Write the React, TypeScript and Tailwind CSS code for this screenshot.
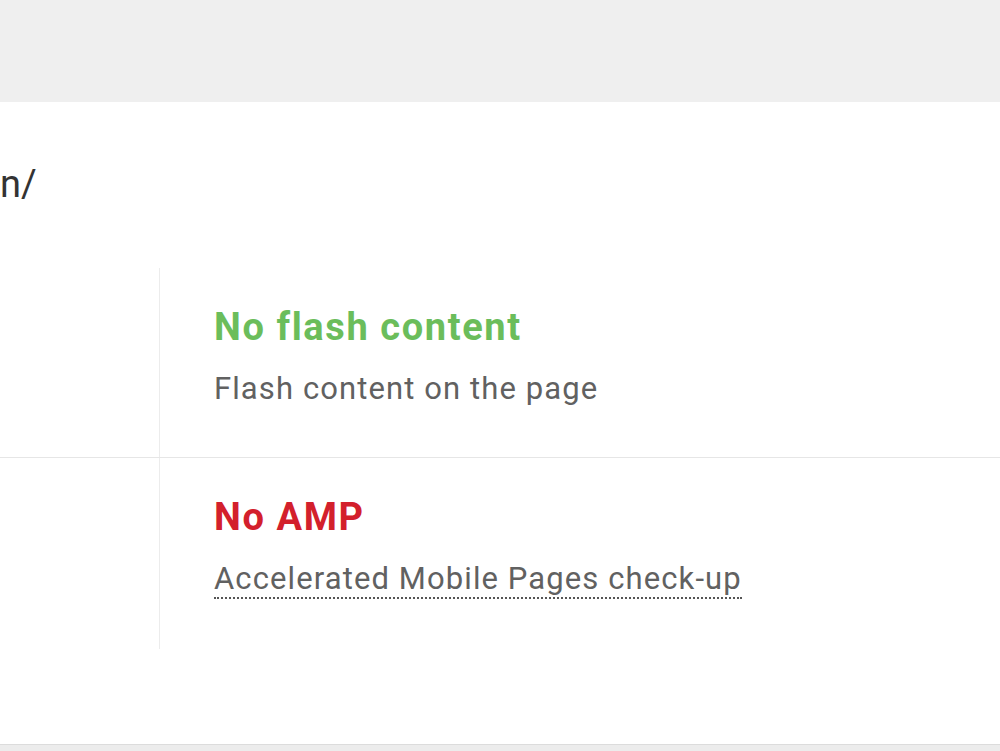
const rows = [
  {
    title: "No flash content",
    tone: "text-[#6bbd5b]",
    note: "Flash content on the page",
    dotted: false,
  },
  {
    title: "No AMP",
    tone: "text-[#d3202c]",
    note: "Accelerated Mobile Pages check-up",
    dotted: true,
  },
];

export default function App() {
  return (
    <div className="flex h-[751px] w-full flex-col overflow-hidden bg-white font-['Roboto',sans-serif]">
      <div className="h-[102px] shrink-0 bg-[#efefef]" />

      <div className="mt-[60px] text-[38px] leading-[44px] text-[#333]">n/</div>

      <div className="mt-[62px]">
        {rows.map((row, i) => (
          <div
            key={row.title}
            className={i === 0 ? "flex border-b border-[#e6e6e6]" : "flex"}
          >
            <div className="w-[160px] shrink-0 border-r border-[#ececec]" />
            <div className="flex flex-1 flex-col items-start pl-[54px] pt-[39px] pb-[50px]">
              <div className={`text-[38px] font-bold leading-[40px] tracking-[1.6px] ${row.tone}`}>
                {row.title}
              </div>
              <div
                className={
                  row.dotted
                    ? "mt-[24px] border-b-2 border-dotted border-[#555] text-[31px] leading-[36px] tracking-[1.1px] text-[#616161]"
                    : "mt-[24px] text-[31px] leading-[36px] tracking-[1.1px] text-[#616161]"
                }
              >
                {row.note}
              </div>
            </div>
          </div>
        ))}
      </div>

      <div className="mt-auto h-[7px] shrink-0 border-t border-[#dcdcdc] bg-[#ececec]" />
    </div>
  );
}
